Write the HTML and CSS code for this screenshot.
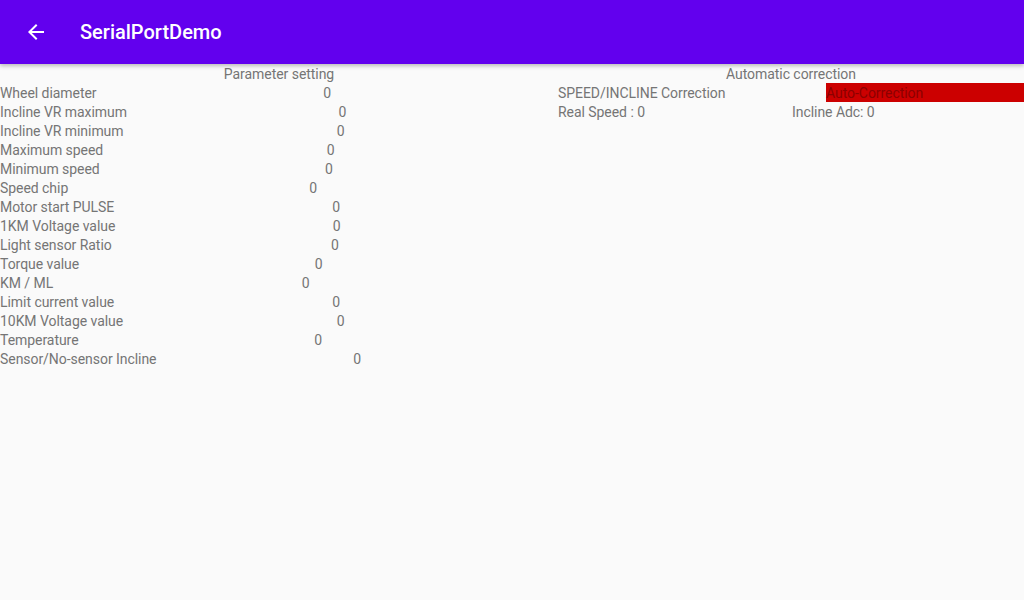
FILE: index.html
```html
<!DOCTYPE html>
<html>
<head>
<meta charset="utf-8">
<link rel="stylesheet" href="styles.css">
</head>
<body>
<header class="appbar">
  <svg class="back" width="24" height="24" viewBox="0 0 24 24"><path d="M20 11H7.83l5.59-5.59L12 4l-8 8 8 8 1.41-1.41L7.83 13H20v-2z" fill="#fff"/></svg>
  <h1 class="title">SerialPortDemo</h1>
</header>
<main class="content">
  <section class="left">
    <div class="heading">Parameter setting</div>
    <div class="row"><span class="label">Wheel diameter</span><span class="value">0</span></div>
    <div class="row"><span class="label">Incline VR maximum</span><span class="value">0</span></div>
    <div class="row"><span class="label">Incline VR minimum</span><span class="value">0</span></div>
    <div class="row"><span class="label">Maximum speed</span><span class="value">0</span></div>
    <div class="row"><span class="label">Minimum speed</span><span class="value">0</span></div>
    <div class="row"><span class="label">Speed chip</span><span class="value">0</span></div>
    <div class="row"><span class="label">Motor start PULSE</span><span class="value">0</span></div>
    <div class="row"><span class="label">1KM Voltage value</span><span class="value">0</span></div>
    <div class="row"><span class="label">Light sensor Ratio</span><span class="value">0</span></div>
    <div class="row"><span class="label">Torque value</span><span class="value">0</span></div>
    <div class="row"><span class="label">KM / ML</span><span class="value">0</span></div>
    <div class="row"><span class="label">Limit current value</span><span class="value">0</span></div>
    <div class="row"><span class="label">10KM Voltage value</span><span class="value">0</span></div>
    <div class="row"><span class="label">Temperature</span><span class="value">0</span></div>
    <div class="row"><span class="label">Sensor/No-sensor Incline</span><span class="value">0</span></div>
  </section>
  <section class="right">
    <div class="heading">Automatic correction</div>
    <div class="row">
      <span class="corr-label">SPEED/INCLINE Correction</span>
      <span class="auto-btn">Auto-Correction</span>
    </div>
    <div class="row">
      <span class="half">Real Speed : 0</span>
      <span class="half">Incline Adc: 0</span>
    </div>
  </section>
</main>
</body>
</html>
```
FILE: styles.css
```css
html, body {
  margin: 0;
  padding: 0;
}
body {
  width: 1024px;
  height: 600px;
  background: #fafafa;
  font-family: Roboto, "Liberation Sans", sans-serif;
  overflow: hidden;
}
.appbar {
  height: 64px;
  background: #6200ee;
  display: flex;
  align-items: center;
  padding-left: 24px;
  box-sizing: border-box;
  box-shadow: 0 2px 4px rgba(0,0,0,0.25);
  position: relative;
  z-index: 1;
}
.back {
  display: block;
  margin-right: 32px;
}
.title {
  margin: 0;
  color: #fff;
  font-size: 20px;
  font-weight: 500;
  letter-spacing: 0;
}
.content {
  display: flex;
  font-size: 14px;
  color: #757575;
  line-height: 19px;
  letter-spacing: -0.05px;
}
.left {
  width: 558px;
}
.right {
  flex: 1;
}
.heading {
  text-align: center;
  height: 19px;
  box-sizing: border-box;
  padding-top: 1px;
}
.row {
  display: flex;
  height: 19px;
}
.row > span {
  box-sizing: border-box;
  height: 19px;
  padding-top: 1px;
}
.value {
  flex: 1;
  text-align: center;
}
.corr-label {
  flex: 1;
}
.auto-btn {
  width: 198px;
  background: #cc0000;
  color: #8b0000;
}
.half {
  flex: 1;
}
.half + .half {
  padding-left: 2px;
}
```
